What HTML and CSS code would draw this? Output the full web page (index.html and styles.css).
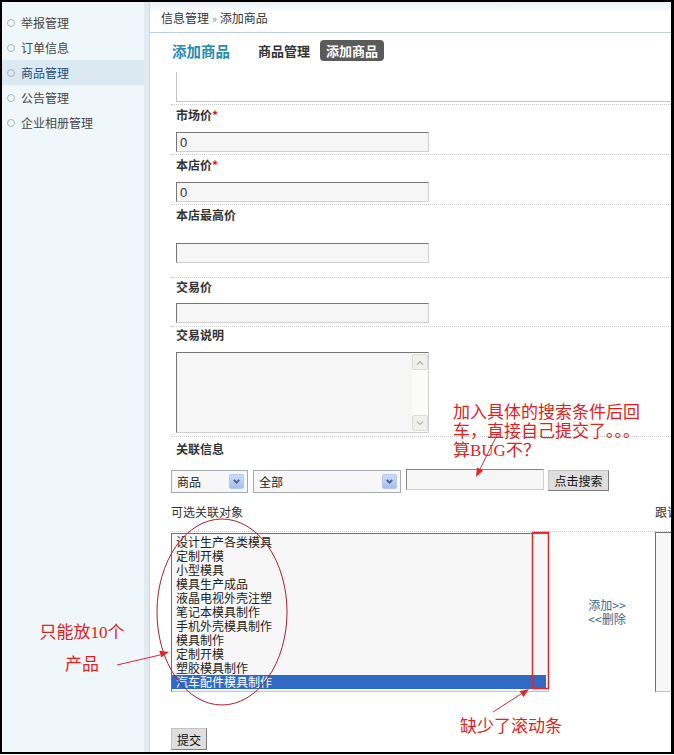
FILE: index.html
```html
<!DOCTYPE html>
<html lang="zh-CN">
<head>
    <meta charset="UTF-8">
    <meta name="viewport" content="width=device-width, initial-scale=1.0">
    <title>添加商品</title>
    <link rel="stylesheet" href="styles.css">
</head>
<body>
    <div class="frame">
        <aside class="sidebar">
            <ul class="side-menu">
                <li>举报管理</li>
                <li>订单信息</li>
                <li class="active">商品管理</li>
                <li>公告管理</li>
                <li>企业相册管理</li>
            </ul>
        </aside>
        <div class="side-gap"></div>

        <div class="main">
            <div class="crumb">信息管理 <span class="raquo">»</span> 添加商品</div>
            <div class="tabs">
                <h2 class="tab-title">添加商品</h2>
                <a class="tab" href="#list">商品管理</a>
                <a class="tab current" href="#add">添加商品</a>
            </div>

            <form class="form-body" id="goods-form">
                <div class="field field-top">
                    <div class="editor"></div>
                </div>

                <div class="field">
                    <div class="field-label">市场价<span class="req">*</span></div>
                    <input type="text" class="text-input" value="0">
                </div>

                <div class="field">
                    <div class="field-label">本店价<span class="req">*</span></div>
                    <input type="text" class="text-input" value="0">
                </div>

                <div class="field field-spaced">
                    <div class="field-label">本店最高价</div>
                    <input type="text" class="text-input">
                </div>

                <div class="field field-deal">
                    <div class="field-label">交易价</div>
                    <input type="text" class="text-input">
                </div>

                <div class="field field-note">
                    <div class="field-label">交易说明</div>
                    <div class="textarea">
                        <div class="scroll">
                            <span class="scroll-btn">
                                <svg width="8" height="5" viewBox="0 0 8 5"><path d="M1 4.5 L4 1.5 L7 4.5" fill="none" stroke="#b3b3a8" stroke-width="1.2"/></svg>
                            </span>
                            <span class="scroll-btn">
                                <svg width="8" height="5" viewBox="0 0 8 5"><path d="M1 0.5 L4 3.5 L7 0.5" fill="none" stroke="#b3b3a8" stroke-width="1.2"/></svg>
                            </span>
                        </div>
                    </div>
                </div>

                <div class="field field-rel">
                    <div class="field-label">关联信息</div>
                    <div class="search-row">
                        <div class="select select-type">
                            <span class="select-text">商品</span>
                            <span class="select-btn">
                                <svg width="7" height="5" viewBox="0 0 7 5"><path d="M0.8 0.8 L3.5 3.6 L6.2 0.8" fill="none" stroke="#4a5f8a" stroke-width="1.8"/></svg>
                            </span>
                        </div>
                        <div class="select select-cat">
                            <span class="select-text">全部</span>
                            <span class="select-btn">
                                <svg width="7" height="5" viewBox="0 0 7 5"><path d="M0.8 0.8 L3.5 3.6 L6.2 0.8" fill="none" stroke="#4a5f8a" stroke-width="1.8"/></svg>
                            </span>
                        </div>
                        <input type="text" class="search-input">
                        <button type="button" class="btn btn-search">点击搜索</button>
                    </div>

                    <div class="rel-table">
                        <div class="rel-head">可选关联对象</div>
                        <div class="rel-head"></div>
                        <div class="rel-head">跟该商品关联的对象</div>

                        <ul class="listbox">
                            <li>设计生产各类模具</li>
                            <li>定制开模</li>
                            <li>小型模具</li>
                            <li>模具生产成品</li>
                            <li>液晶电视外壳注塑</li>
                            <li>笔记本模具制作</li>
                            <li>手机外壳模具制作</li>
                            <li>模具制作</li>
                            <li>定制开模</li>
                            <li>塑胶模具制作</li>
                            <li class="selected">汽车配件模具制作</li>
                        </ul>
                        <div class="rel-actions">
                            <a href="#add-rel">添加&gt;&gt;</a>
                            <a href="#del-rel">&lt;&lt;删除</a>
                        </div>
                        <ul class="listbox listbox-picked"></ul>
                    </div>

                    <button type="submit" class="btn btn-submit">提交</button>
                </div>
            </form>
        </div>
    </div>

    <!-- review marks drawn over the screenshot -->
    <svg class="marks" width="674" height="755" viewBox="0 0 674 755">
        <ellipse cx="222" cy="612" rx="65" ry="93" fill="none" stroke="#a8202a" stroke-width="1"/>
        <rect x="532.5" y="532.5" width="16" height="156" fill="none" stroke="#e0262b" stroke-width="1.5"/>
        <line x1="498" y1="433" x2="480" y2="469" stroke="#e0262b" stroke-width="1"/>
        <polygon points="476,477 483.1,470.6 476.9,467.4" fill="#e0262b"/>
        <line x1="117" y1="665" x2="160" y2="655" stroke="#e0262b" stroke-width="1"/>
        <polygon points="169,652 161,657.5 159.4,650.7" fill="#e0262b"/>
        <line x1="493" y1="712" x2="521" y2="694" stroke="#e0262b" stroke-width="1"/>
        <polygon points="529,689 523.6,697 519.6,691.2" fill="#e0262b"/>
    </svg>
    <div class="note note-search">加入具体的搜索条件后回<br>车，直接自己提交了。。。<br>算BUG不？</div>
    <div class="note note-limit">只能放10个<br>产品</div>
    <div class="note note-scroll">缺少了滚动条</div>
</body>
</html>
```

FILE: styles.css
```css
* {
    box-sizing: border-box;
}

body {
    margin: 0;
    width: 674px;
    height: 755px;
    position: relative;
    overflow: hidden;
    background: #fff;
    font-family: "Noto Sans CJK SC", sans-serif;
    font-size: 12px;
    color: #333;
}

.frame {
    display: flex;
    width: 674px;
    height: 754px;
    border: 2px solid #000;
    border-right-width: 3px;
    overflow: hidden;
}

/* left menu */
.sidebar {
    width: 142px;
    flex-shrink: 0;
    background: #f0f7fb;
}

.side-gap {
    width: 6px;
    flex-shrink: 0;
    background: #e1ebf1;
    border-right: 1px solid #c9d8e1;
}

.side-menu {
    list-style: none;
    margin: 0;
    padding: 8px 0 0;
}

.side-menu li {
    display: flex;
    align-items: center;
    height: 25px;
    padding-left: 5px;
    color: #444;
}

.side-menu li::before {
    content: "";
    width: 6px;
    height: 6px;
    border: 1px solid #aab5bd;
    border-radius: 50%;
    margin-right: 6px;
}

.side-menu li.active {
    background: #dbe9f3;
    color: #1d4a72;
}

/* main area */
.main {
    flex: 1;
    min-width: 0;
    overflow: hidden;
}

.crumb {
    height: 31px;
    line-height: 32px;
    padding-left: 11px;
    border-bottom: 1px solid #bfcdd6;
    background: linear-gradient(#e9f1f6, #fff 40%);
}

.raquo {
    font-size: 11px;
    color: #888;
}

.tabs {
    display: flex;
    align-items: center;
    height: 39px;
    padding: 0 0 5px 22px;
}

.tab-title {
    margin: 0 22px 0 0;
    font-size: 14.5px;
    color: #2a8bb0;
}

.tab {
    height: 21px;
    line-height: 21px;
    padding: 0 6px;
    border-radius: 4px;
    font-size: 13px;
    font-weight: bold;
    color: #333;
    text-decoration: none;
}

.tab.current {
    margin-left: 4px;
    background: #5b5b5b;
    color: #fff;
}

/* form */
.form-body {
    margin: 0;
    padding-left: 21px;
}

.field {
    padding: 2px 0 2px 5px;
    border-bottom: 1px dotted #c9c9c9;
}

.field-top {
    padding-top: 0;
}

.editor {
    width: 600px;
    height: 30px;
    border: 1px solid #c4c4c4;
    border-top: none;
}

.field-label {
    line-height: 16px;
    font-weight: bold;
    color: #333;
}

.req {
    color: #c41e24;
}

.text-input {
    display: block;
    width: 253px;
    height: 20px;
    margin-top: 9px;
    padding: 0 3px;
    border: 1px solid;
    border-color: #767676 #cfcfcf #cfcfcf #767676;
    background: #f6f6f6;
    font-family: "Liberation Sans", "Noto Sans CJK SC", sans-serif;
    font-size: 13px;
    color: #333;
}

.field-spaced .text-input {
    margin-top: 20px;
}

.field-spaced {
    padding-bottom: 14px;
}

.field-deal {
    padding-top: 1px;
    padding-bottom: 3px;
}

.field-deal .text-input {
    margin-top: 8px;
}

.field-note {
    padding-top: 0;
    padding-bottom: 3px;
}

.textarea {
    display: flex;
    justify-content: flex-end;
    width: 253px;
    height: 81px;
    margin-top: 9px;
    border: 1px solid;
    border-color: #767676 #cfcfcf #cfcfcf #767676;
    background: #f6f6f6;
}

.scroll {
    width: 16px;
    display: flex;
    flex-direction: column;
    justify-content: space-between;
    padding: 1px 0;
    background: #fbfbf7;
}

.scroll-btn {
    display: flex;
    align-items: center;
    justify-content: center;
    height: 16px;
    border: 1px solid #dcdcd3;
    border-radius: 2px;
    background: #f1f1eb;
}

/* related items */
.field-rel {
    padding: 4px 0 0;
    border-bottom: none;
}

.field-rel .field-label {
    padding-left: 5px;
}

.search-row {
    display: flex;
    align-items: flex-start;
    margin-top: 12px;
    height: 24px;
}

.select {
    display: flex;
    align-items: center;
    height: 23px;
    margin-top: 1px;
    padding-left: 5px;
    border: 1px solid #a5abb0;
    background: #f7f7f7;
    color: #222;
}

.select-type {
    width: 77px;
}

.select-cat {
    width: 148px;
    margin-left: 5px;
}

.select-text {
    flex: 1;
}

.select-btn {
    display: flex;
    align-items: center;
    justify-content: center;
    width: 15px;
    height: 15px;
    margin-right: 3px;
    border: 1px solid #b4c7ec;
    border-radius: 2px;
    background: linear-gradient(#cbdcf8, #a4bfee);
}

.search-input {
    width: 138px;
    height: 21px;
    margin-left: 5px;
    border: 1px solid;
    border-color: #858585 #cfcfcf #cfcfcf #858585;
    background: #f6f6f6;
}

.btn {
    padding: 0;
    border: 1px solid;
    border-color: #c4c4c4 #7c7c7c #7c7c7c #c4c4c4;
    background: #dedede;
    font-family: "Noto Sans CJK SC", sans-serif;
    font-size: 12px;
    color: #111;
}

.btn-search {
    width: 61px;
    height: 21px;
    margin: 1px 0 0 4px;
}

.btn-submit {
    display: block;
    width: 36px;
    height: 22px;
    margin-top: 36px;
}

.rel-table {
    display: grid;
    grid-template-columns: 378px 106px 200px;
    margin-top: 11px;
}

.rel-head {
    line-height: 16px;
    padding-bottom: 11px;
    border-bottom: 1px dotted #c9c9c9;
    white-space: nowrap;
}

.listbox {
    list-style: none;
    margin: 1px 0 0;
    padding: 1px 2px 0 0;
    height: 159px;
    border: 1px solid;
    border-color: #707070 #c4c4c4 #c4c4c4 #707070;
    background: #f7f7f7;
    overflow: hidden;
}

.listbox li {
    height: 14px;
    line-height: 14px;
    padding-left: 4px;
    color: #222;
    white-space: nowrap;
}

.listbox li.selected {
    background: #316ac5;
    color: #fff;
}

.listbox-picked {
    margin-top: 0;
    height: 160px;
}

.rel-actions {
    display: flex;
    flex-direction: column;
    justify-content: center;
    align-items: center;
    padding-left: 10px;
    line-height: 14px;
}

.rel-actions a {
    color: #35698e;
    text-decoration: none;
}

/* review marks */
.marks {
    position: absolute;
    left: 0;
    top: 0;
    pointer-events: none;
}

.note {
    position: absolute;
    font-family: "Liberation Serif", "Noto Sans CJK SC", serif;
    font-size: 17px;
    line-height: 19px;
    color: #e3201c;
    white-space: nowrap;
}

.note-search {
    left: 453px;
    top: 403px;
}

.note-limit {
    left: 36px;
    top: 617px;
    width: 92px;
    line-height: 32px;
    text-align: center;
}

.note-scroll {
    left: 460px;
    top: 717px;
}
```
